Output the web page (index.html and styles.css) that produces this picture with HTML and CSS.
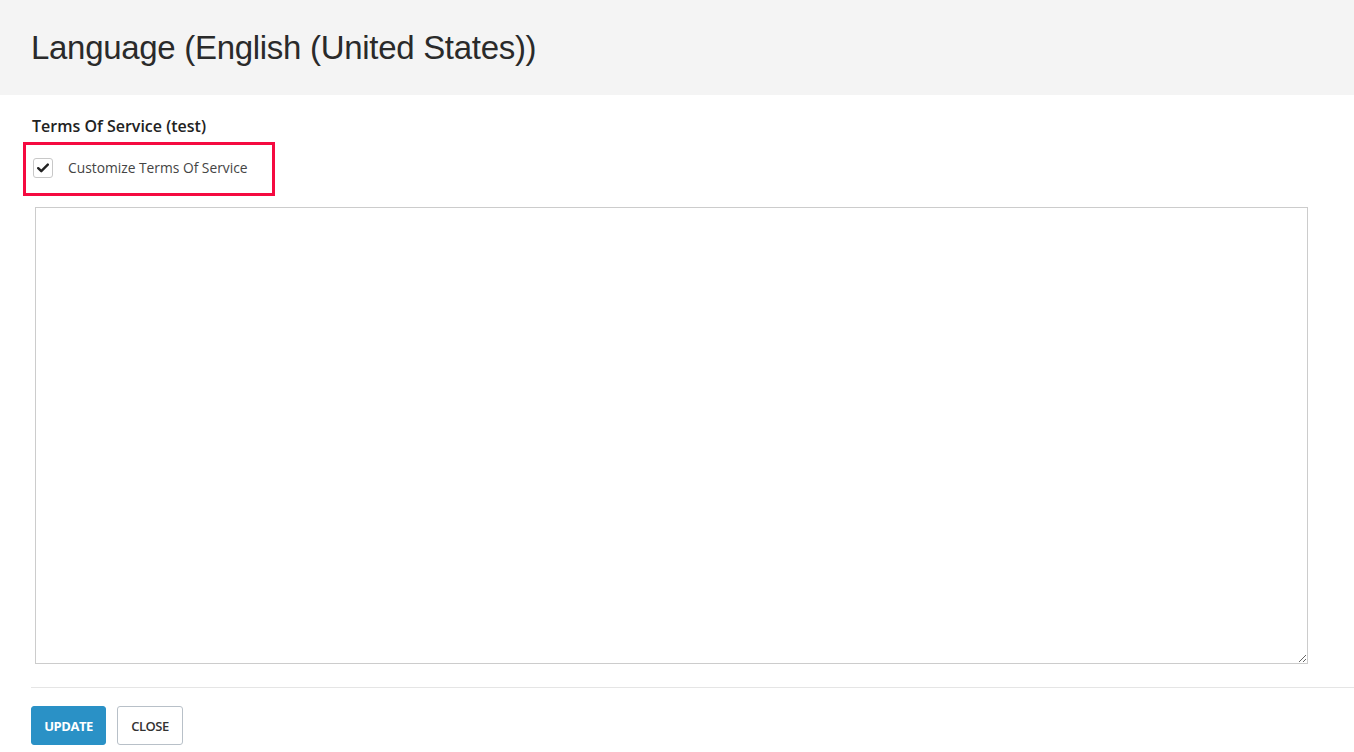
FILE: index.html
```html
<!DOCTYPE html>
<html>
<head>
<meta charset="utf-8">
<link rel="stylesheet" href="styles.css">
</head>
<body>
<div class="header">
  <h1 class="title">Language (English (United States))</h1>
</div>
<div class="content">
  <div class="label">Terms Of Service (test)</div>
  <div class="highlight">
    <label class="check-row">
      <span class="checkbox">
        <svg width="12" height="10" viewBox="0 0 12 10"><path d="M1.2 5.2 L4.3 8.2 L10.8 1.6" fill="none" stroke="#222" stroke-width="2.4" stroke-linecap="round" stroke-linejoin="round"/></svg>
      </span>
      <span class="check-text">Customize Terms Of Service</span>
    </label>
  </div>
  <textarea class="editor"></textarea>
</div>
<div class="footer">
  <button class="btn btn-primary">UPDATE</button>
  <button class="btn btn-default">CLOSE</button>
</div>
</body>
</html>
```
FILE: styles.css
```css
html, body {
  margin: 0;
  padding: 0;
  background: #fff;
  font-family: "Liberation Sans", Arial, sans-serif;
  color: #333;
}
.header {
  background: #f4f4f4;
  height: 95px;
  display: flex;
  align-items: center;
  padding-left: 31px;
}
.title {
  margin: 0;
  font-family: "Liberation Sans", Arial, sans-serif;
  font-weight: normal;
  font-size: 33px;
  color: #2a2a2a;
  letter-spacing: -0.3px;
}
.content {
  padding: 0 46px 0 23px;
}
.label {
  margin: 22px 0 0 9px;
  font-family: "Open Sans", sans-serif;
  font-weight: 600;
  font-size: 16px;
  line-height: 18px;
  color: #222;
}
.highlight {
  margin-top: 7px;
  width: 246px;
  height: 48px;
  border: 3px solid #f50a40;
  display: flex;
  align-items: center;
}
.check-row {
  display: flex;
  align-items: center;
  padding-left: 7px;
  margin-top: -3px;
}
.checkbox {
  width: 20px;
  height: 20px;
  border: 1px solid #c8c8c8;
  border-radius: 3px;
  display: flex;
  align-items: center;
  justify-content: center;
  box-sizing: border-box;
}
.check-text {
  margin-left: 15px;
  font-family: "Open Sans", sans-serif;
  font-size: 13.8px;
  color: #444;
}
.editor {
  display: block;
  margin: 11px 0 0 12px;
  width: 1273px;
  height: 457px;
  box-sizing: border-box;
  border: 1px solid #cccccc;
  resize: both;
  outline: none;
}
.footer {
  margin: 23px 0 0 31px;
  border-top: 1px solid #e5e5e5;
  padding-top: 18px;
  display: flex;
  gap: 11px;
}
.btn {
  height: 39px;
  border-radius: 3px;
  font-family: "Open Sans", sans-serif;
  font-size: 13px;
  font-weight: 700;
  letter-spacing: -0.5px;
  padding: 0 12px;
  box-sizing: border-box;
}
.btn-primary {
  background: #2a91c6;
  color: #fff;
  border: 1px solid #2a91c6;
  width: 75px;
}
.btn-default {
  background: #fff;
  color: #333;
  border: 1px solid #b8c0c8;
  width: 66px;
  font-weight: 600;
}
```
